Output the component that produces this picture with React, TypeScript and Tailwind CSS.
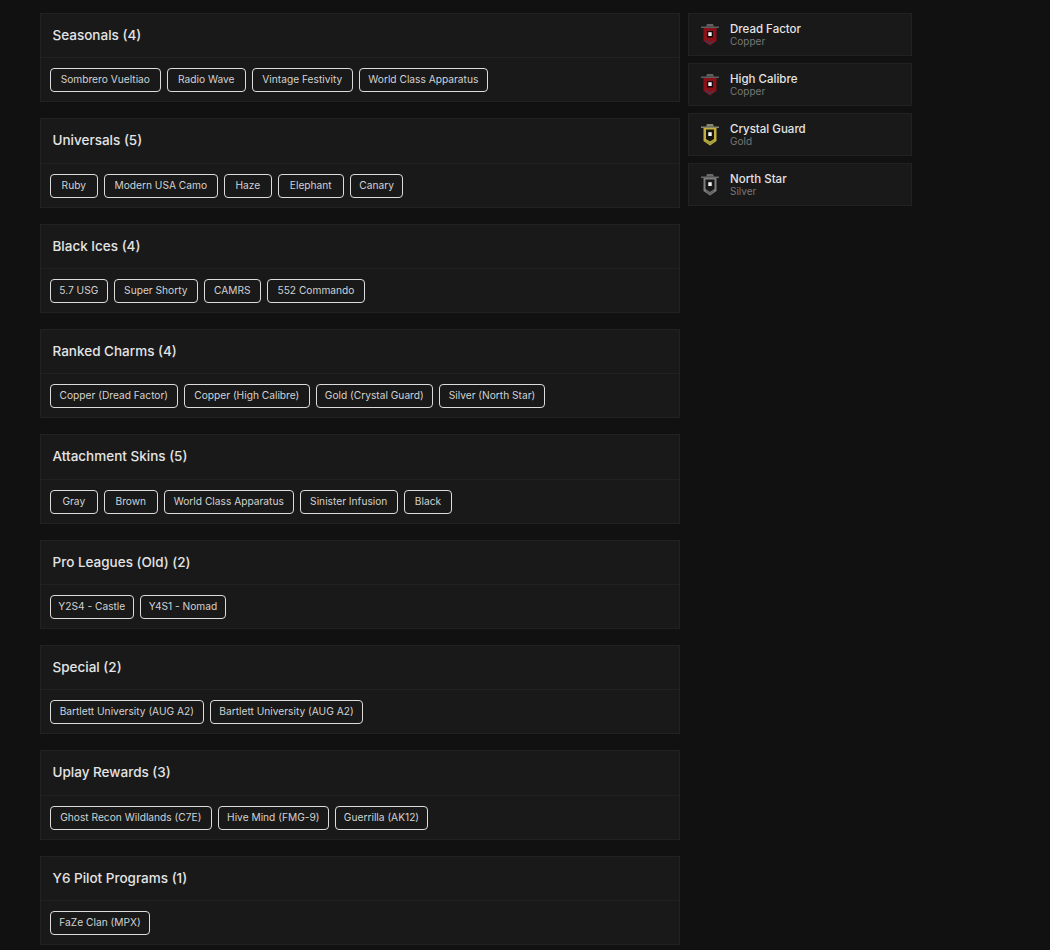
const groups = [
  {
    title: "Seasonals (4)",
    items: [
      { label: "Sombrero Vueltiao", width: "w-[110.6px]" },
      { label: "Radio Wave", width: "w-[78.6px]" },
      { label: "Vintage Festivity", width: "w-[100.6px]" },
      { label: "World Class Apparatus", width: "w-[128.7px]" },
    ],
  },
  {
    title: "Universals (5)",
    items: [
      { label: "Ruby", width: "w-[47.6px]" },
      { label: "Modern USA Camo", width: "w-[113.6px]" },
      { label: "Haze", width: "w-[47.6px]" },
      { label: "Elephant", width: "w-[65.6px]" },
      { label: "Canary", width: "w-[53.4px]" },
    ],
  },
  {
    title: "Black Ices (4)",
    items: [
      { label: "5.7 USG", width: "w-[57.6px]" },
      { label: "Super Shorty", width: "w-[83.6px]" },
      { label: "CAMRS", width: "w-[56.6px]" },
      { label: "552 Commando", width: "w-[98px]" },
    ],
  },
  {
    title: "Ranked Charms (4)",
    items: [
      { label: "Copper (Dread Factor)", width: "w-[127.6px]" },
      { label: "Copper (High Calibre)", width: "w-[125.6px]" },
      { label: "Gold (Crystal Guard)", width: "w-[116.6px]" },
      { label: "Silver (North Star)", width: "w-[106px]" },
    ],
  },
  {
    title: "Attachment Skins (5)",
    items: [
      { label: "Gray", width: "w-[47.6px]" },
      { label: "Brown", width: "w-[53.6px]" },
      { label: "World Class Apparatus", width: "w-[129.6px]" },
      { label: "Sinister Infusion", width: "w-[97.6px]" },
      { label: "Black", width: "w-[48px]" },
    ],
  },
  {
    title: "Pro Leagues (Old) (2)",
    items: [
      { label: "Y2S4 - Castle", width: "w-[83.6px]" },
      { label: "Y4S1 - Nomad", width: "w-[86px]" },
    ],
  },
  {
    title: "Special (2)",
    items: [
      { label: "Bartlett University (AUG A2)", width: "w-[153.6px]" },
      { label: "Bartlett University (AUG A2)", width: "w-[153px]" },
    ],
  },
  {
    title: "Uplay Rewards (3)",
    items: [
      { label: "Ghost Recon Wildlands (C7E)", width: "w-[161.6px]" },
      { label: "Hive Mind (FMG-9)", width: "w-[110.6px]" },
      { label: "Guerrilla (AK12)", width: "w-[93px]" },
    ],
  },
  {
    title: "Y6 Pilot Programs (1)",
    items: [{ label: "FaZe Clan (MPX)", width: "w-[100px]" }],
  },
];

const charms = [
  { name: "Dread Factor", tier: "Copper", main: "#8a1118", edge: "#5f5f5f", inner: "#120607", mark: "#34405c", well: "M7 8 L13 8 L13 14.5 L7 14.5 Z" },
  { name: "High Calibre", tier: "Copper", main: "#8a1118", edge: "#5f5f5f", inner: "#120607", mark: "#34405c", well: "M7 8 L13 8 L13 14.5 L7 14.5 Z" },
  { name: "Crystal Guard", tier: "Gold", main: "#c4ae3e", edge: "#87876f", inner: "#14140c", mark: "#8f9a3a", well: "M6 6.5 L14 6.5 L14 16 L10 18.5 L6 16 Z" },
  { name: "North Star", tier: "Silver", main: "#7e7e7e", edge: "#6a6a6a", inner: "#181818", mark: "#5c5c5c", well: "M5.5 6.5 L14.5 6.5 L14.5 16 L10 19 L5.5 16 Z" },
];

function CharmIcon({ main, edge, inner, mark, well }: { main: string; edge: string; inner: string; mark: string; well: string }) {
  return (
    <svg width="20" height="24" viewBox="0 0 20 24" className="shrink-0">
      <path d="M7 1 L13 1 L14 3.5 L6 3.5 Z" fill={edge} />
      <rect x="1" y="3.5" width="18" height="1.5" fill={edge} />
      <path d="M3.5 5 L16.5 5 L16.5 18 L10 22.5 L3.5 18 Z" fill={main} />
      <path d={well} fill={inner} />
      <rect x="8.3" y="9.2" width="3.4" height="3.8" fill="#f4f4f4" />
      <path d="M6 17 L10 20 L14 17 L14 18.5 L10 21.5 L6 18.5 Z" fill={mark} />
    </svg>
  );
}

export default function App() {
  return (
    <div className="min-h-[950px] bg-[#111111] font-['Inter','Liberation_Sans',sans-serif]">
      <div className="flex items-start gap-2 pl-10 pt-[12.8px]">
        <div className="flex w-[640px] flex-col gap-4">
          {groups.map((group) => (
            <section key={group.title} className="border border-[#222222] bg-[#191919]">
              <h2 className="border-b border-[#222222] px-[11.5px] py-3 text-[13.5px] leading-[19.375px] font-medium text-[#e4e4e4]">
                {group.title}
              </h2>
              <div className="flex gap-[6.4px] px-[9px] pt-[10px] pb-[9px]">
                {group.items.map((item, i) => (
                  <span
                    key={i}
                    className={`${item.width} rounded-[4px] border border-[#dcdcdc] pb-[1px] text-center text-[10.2px] leading-[21px] whitespace-nowrap text-[#d2d2d2]`}
                  >
                    {item.label}
                  </span>
                ))}
              </div>
            </section>
          ))}
        </div>
        <div className="mt-[0.5px] flex w-[224px] flex-col gap-[7px]">
          {charms.map((charm) => (
            <div key={charm.name} className="flex h-[43px] items-center gap-[10.5px] border border-[#222222] bg-[#191919] pl-[10.5px]">
              <CharmIcon main={charm.main} edge={charm.edge} inner={charm.inner} mark={charm.mark} well={charm.well} />
              <div>
                <p className="text-[11.5px] leading-[13px] font-medium text-[#e4e4e4]">{charm.name}</p>
                <p className="text-[10px] leading-[11px] text-[#777777]">{charm.tier}</p>
              </div>
            </div>
          ))}
        </div>
      </div>
    </div>
  );
}
